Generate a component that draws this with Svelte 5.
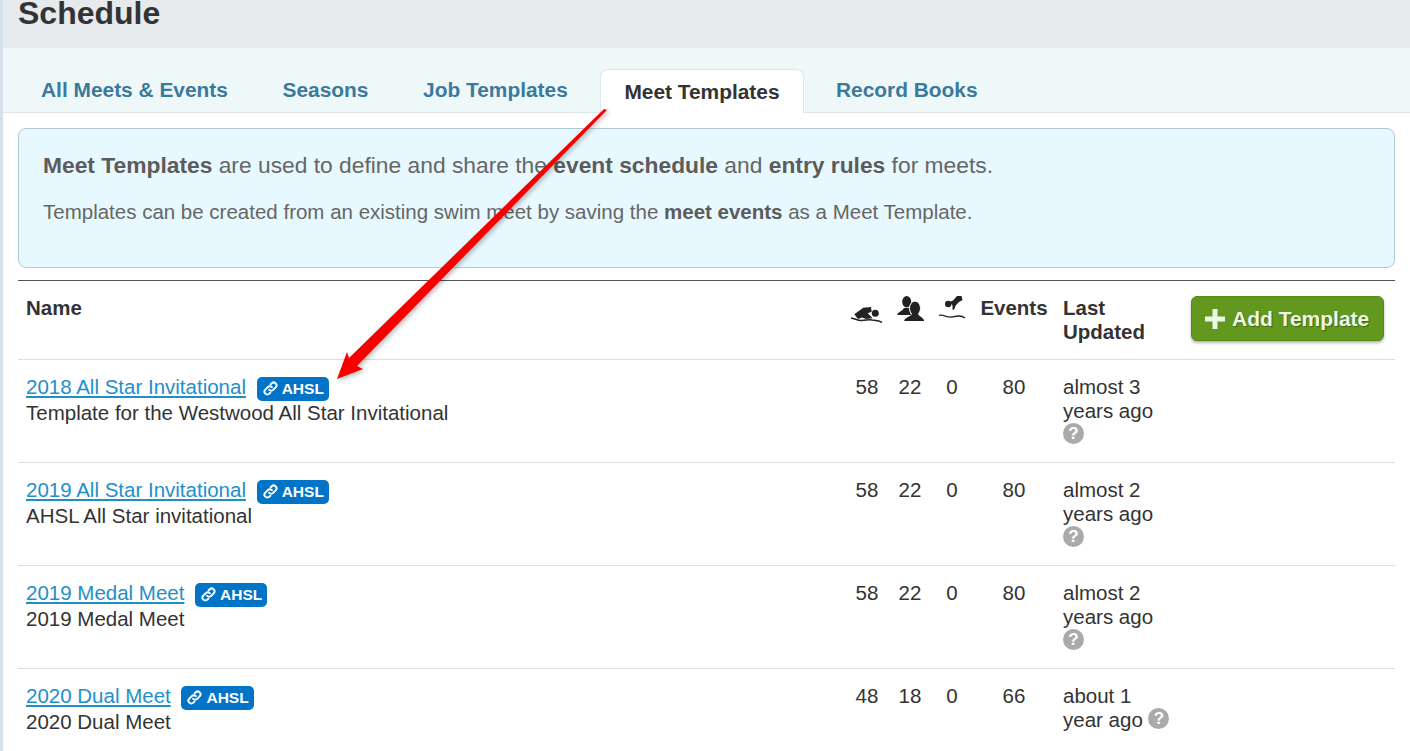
<script lang="ts">
  const tabs = [
    { label: 'All Meets & Events' },
    { label: 'Seasons' },
    { label: 'Job Templates' },
    { label: 'Meet Templates', active: true },
    { label: 'Record Books' }
  ];

  const templates = [
    { name: '2018 All Star Invitational', desc: 'Template for the Westwood All Star Invitational', a: 58, b: 22, c: 0, events: 80, updated: 'almost 3 years ago' },
    { name: '2019 All Star Invitational', desc: 'AHSL All Star invitational', a: 58, b: 22, c: 0, events: 80, updated: 'almost 2 years ago' },
    { name: '2019 Medal Meet', desc: '2019 Medal Meet', a: 58, b: 22, c: 0, events: 80, updated: 'almost 2 years ago' },
    { name: '2020 Dual Meet', desc: '2020 Dual Meet', a: 48, b: 18, c: 0, events: 66, updated: 'about 1 year ago' }
  ];
</script>

<div class="page">
  <header class="title-bar">
    <h1>Schedule</h1>
  </header>

  <nav class="tabs">
    {#each tabs as tab}
      <span class="tab" class:active={tab.active}>{tab.label}</span>
    {/each}
  </nav>

  <section class="content">
    <div class="info">
      <p class="lead"><b>Meet Templates</b> are used to define and share the <b>event schedule</b> and <b>entry rules</b> for meets.</p>
      <p class="sub">Templates can be created from an existing swim meet by saving the <b>meet events</b> as a Meet Template.</p>
    </div>

    <table>
      <colgroup>
        <col style="width: 827px" />
        <col style="width: 44px" />
        <col style="width: 42px" />
        <col style="width: 42px" />
        <col style="width: 82px" />
        <col style="width: 128px" />
        <col style="width: 212px" />
      </colgroup>
      <thead>
        <tr>
          <th>Name</th>
          <th class="num">
            <svg class="hd-icon swim" viewBox="0 0 32 16" width="32" height="16">
              <path d="M3.300 7.300 L12.300 0.700 L20 0 L20.700 4.700 L16.700 6.300 L21.700 11.300 L15 12 L11 10.500 L7 12 Z" fill="#222" />
              <circle cx="24.300" cy="6.300" r="3.500" fill="#222" />
              <path d="M0 11 C4 11.500 7 14 11 13.500 C15 13 18 12.500 21 13 C25 13.500 28 13.500 31 15.300" fill="none" stroke="#222" stroke-width="1.500" />
            </svg>
          </th>
          <th class="num">
            <svg class="hd-icon people" viewBox="0 0 28 25" width="28" height="25">
              <ellipse cx="10.700" cy="5.700" rx="4.500" ry="5.700" fill="#222" />
              <path d="M1.300 19 C1.300 16 6 15.500 8 12 L13 12 L15 19 Z" fill="#222" />
              <ellipse cx="19" cy="12.300" rx="5.500" ry="7.200" fill="#222" stroke="#fff" stroke-width="1" />
              <path d="M8.300 25 C8.300 21.500 13.500 21.500 16 18 L22 18 C24 21.500 28 21.500 28 25 Z" fill="#222" />
            </svg>
          </th>
          <th class="num">
            <svg class="hd-icon diver" viewBox="0 0 27 24" width="27" height="24">
              <circle cx="9.200" cy="9" r="3.200" fill="#222" />
              <path d="M11.500 6.500 L14 5.500 L18 1 L22.500 1 L23.500 5 L20 7 L17 10 L14.800 15 L13.500 14.500 L13.500 10.500 L11.500 8 Z" fill="#222" />
              <path d="M0 20.500 C4 19 8 23 13 22 C18 21 22 20 26 23" fill="none" stroke="#222" stroke-width="1.300" />
            </svg>
          </th>
          <th class="num">Events</th>
          <th>Last Updated</th>
          <th>
            <button type="button" class="add">
              <svg viewBox="0 0 20 20" width="20" height="20"><path d="M7.500 0h5v7.500H20v5h-7.500V20h-5v-7.500H0v-5h7.500z" fill="#eef6e6" /></svg>
              Add Template
            </button>
          </th>
        </tr>
      </thead>
      <tbody>
        {#each templates as t}
          <tr>
            <td>
              <!-- svelte-ignore a11y_invalid_attribute -->
              <a href="#">{t.name}</a>
              <span class="badge">
                <svg viewBox="0 0 16 16" width="15" height="15" fill="none" stroke="#fff" stroke-width="2.100" stroke-linecap="round">
                  <path d="M6.600 9.400 a3 3 0 0 0 4.300 0 l2.600-2.600 a3 3 0 0 0-4.300-4.300 l-1 1" />
                  <path d="M9.400 6.600 a3 3 0 0 0-4.300 0 l-2.600 2.600 a3 3 0 0 0 4.300 4.300 l1-1" />
                </svg>
                AHSL
              </span>
              <div class="desc">{t.desc}</div>
            </td>
            <td class="num">{t.a}</td>
            <td class="num">{t.b}</td>
            <td class="num">{t.c}</td>
            <td class="num">{t.events}</td>
            <td>{t.updated} <span class="help">?</span></td>
            <td></td>
          </tr>
        {/each}
      </tbody>
    </table>
  </section>

  <svg class="arrow" width="1410" height="751" viewBox="0 0 1410 751">
    <defs>
      <filter id="arrow-shadow" x="-10%" y="-10%" width="120%" height="120%">
        <feDropShadow dx="2" dy="2" stdDeviation="2" flood-color="#000" flood-opacity="0.25" />
      </filter>
    </defs>
    <path d="M607 110 L357 366 L363 369 L337 379 L347 352 L349 358 L604 109 Z" fill="#f70000" filter="url(#arrow-shadow)" />
  </svg>
</div>

<style>
  :global(body) {
    margin: 0;
    background: #fff;
    font-family: "Liberation Sans", Arial, sans-serif;
    color: #333;
  }

  .page {
    position: relative;
    height: 751px;
    overflow: hidden;
    border-left: 3px solid #d6e1e9;
  }

  .title-bar {
    height: 47px;
    background: #e6eaed;
    border-bottom: 1px solid #e3eaed;
    padding-left: 15px;
  }

  h1 {
    margin: 0;
    font-size: 32px;
    line-height: 26px;
    font-weight: 700;
    color: #333;
  }

  .tabs {
    display: flex;
    align-items: flex-end;
    height: 64px;
    background: #eff8f8;
    border-bottom: 1px solid #dde6ea;
    padding-left: 15px;
  }

  .tab {
    padding: 0 23px 10px;
    margin-right: 8.6px;
    font-size: 20.9px;
    line-height: 24px;
    font-weight: 700;
    color: #3b7a9c;
  }

  .tab.active {
    margin: 0 9.4px -1px 1px;
    padding: 10px 23px 8px;
    background: #fff;
    color: #333;
    border: 1px solid #dde6ea;
    border-bottom: none;
    border-radius: 8px 8px 0 0;
    height: 25px;
  }

  .content {
    padding: 15px 15px 0;
  }

  .info {
    box-sizing: border-box;
    height: 140px;
    background: #e8f8ff;
    border: 1px solid #b0c9d9;
    border-radius: 8px;
    padding: 23px 24px 0;
    color: #666;
  }

  .info p {
    margin: 0;
  }

  .lead {
    font-size: 22.8px;
    line-height: 26px;
  }

  .info .sub {
    margin-top: 23px;
    font-size: 20.5px;
    line-height: 22px;
  }

  .info b {
    color: #5c5c5c;
  }

  table {
    width: 1377px;
    margin-top: 12px;
    border-collapse: collapse;
    table-layout: fixed;
    border-top: 1px solid #555;
    font-size: 20.5px;
    line-height: 24px;
  }

  th {
    height: 79px;
    padding: 15px 8px 0;
    box-sizing: border-box;
    vertical-align: top;
    text-align: left;
    font-weight: 700;
    color: #333;
  }

  td {
    padding: 15px 8px 15px;
    vertical-align: top;
    border-top: 1px solid #dcdfe0;
  }

  tbody tr:last-child td {
    padding-bottom: 17px;
    border-bottom: 1px solid #dcdfe0;
  }

  th.num, td.num {
    padding-left: 0;
    padding-right: 0;
    text-align: center;
  }

  .hd-icon {
    display: block;
    margin: 0 auto;
  }

  .swim { margin-top: 11px; }
  .people { margin-top: 0; }
  .diver { margin-top: -1px; }

  a {
    color: #1e90c8;
    text-decoration: underline;
  }

  .desc {
    margin-top: 0;
    color: #333;
  }

  .badge {
    display: inline-flex;
    align-items: center;
    gap: 4px;
    height: 24px;
    margin-left: 5px;
    padding: 0 5px 0 6px;
    box-sizing: border-box;
    background: #0274c8;
    border-radius: 5px;
    color: #fff;
    font-size: 15.5px;
    font-weight: 700;
    vertical-align: -2px;
  }

  .help {
    display: inline-block;
    width: 21px;
    height: 21px;
    border-radius: 50%;
    background: #aaa;
    color: #fff;
    font-size: 17px;
    line-height: 21px;
    font-weight: 700;
    text-align: center;
    vertical-align: 3px;
  }

  .add {
    display: flex;
    align-items: center;
    gap: 7px;
    width: 193px;
    height: 45px;
    padding: 0 13px;
    background: #62981d;
    border: 1px solid #578a19;
    border-radius: 6px;
    box-shadow: 0 2px 3px rgba(0, 0, 0, 0.3);
    color: #eef6e6;
    font-family: inherit;
    font-size: 21px;
    font-weight: 700;
    text-shadow: 1px 1px 1px rgba(0, 0, 0, 0.35);
  }

  .arrow {
    position: absolute;
    left: -3px;
    top: 0;
    pointer-events: none;
  }
</style>
